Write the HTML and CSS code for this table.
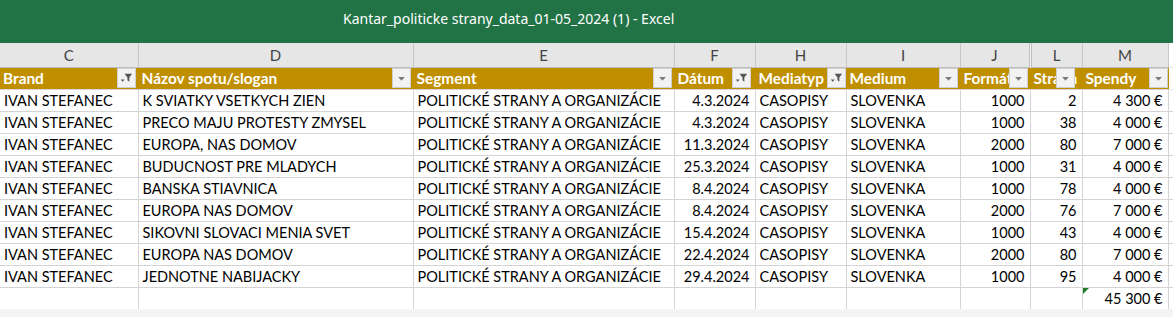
FILE: index.html
```html
<!DOCTYPE html>
<html lang="sk">
<head>
<meta charset="utf-8">
<title>Kantar_politicke strany_data_01-05_2024 (1) - Excel</title>
<link rel="stylesheet" href="styles.css">
</head>
<body>
<header class="titlebar"><span class="title">Kantar_politicke strany_data_01-05_2024 (1) - Excel</span></header>
<main class="sheet">
<table class="grid">
<colgroup>
<col class="w-c"><col class="w-d"><col class="w-e"><col class="w-f"><col class="w-h"><col class="w-i"><col class="w-j"><col class="w-l"><col class="w-m"><col class="w-x">
</colgroup>
<thead>
<tr class="colhead">
<th>C</th><th>D</th><th>E</th><th>F</th><th>H</th><th>I</th><th class="hid">J</th><th>L</th><th>M</th><th class="x"></th>
</tr>
<tr class="fields">
<th><span class="lbl">Brand</span><span class="fbtn"><svg viewBox="0 0 18 18" width="18" height="18"><path d="M7 4.5h8l-3 4v4.5l-2-1.5v-3z" fill="#555"/><path d="M3 10.5h4l-2 2.5z" fill="#555"/></svg></span></th>
<th><span class="lbl">Názov spotu/slogan</span><span class="fbtn"><svg viewBox="0 0 18 18" width="18" height="18"><path d="M5.5 8h7l-3.5 4z" fill="#7a7a7a"/></svg></span></th>
<th><span class="lbl">Segment</span><span class="fbtn"><svg viewBox="0 0 18 18" width="18" height="18"><path d="M5.5 8h7l-3.5 4z" fill="#7a7a7a"/></svg></span></th>
<th><span class="lbl">Dátum</span><span class="fbtn off4"><svg viewBox="0 0 18 18" width="18" height="18"><path d="M7 4.5h8l-3 4v4.5l-2-1.5v-3z" fill="#555"/><path d="M3 10.5h4l-2 2.5z" fill="#555"/></svg></span></th>
<th><span class="lbl">Mediatyp</span><span class="fbtn off0"><svg viewBox="0 0 18 18" width="18" height="18"><path d="M7 4.5h8l-3 4v4.5l-2-1.5v-3z" fill="#555"/><path d="M3 10.5h4l-2 2.5z" fill="#555"/></svg></span></th>
<th><span class="lbl">Medium</span><span class="fbtn"><svg viewBox="0 0 18 18" width="18" height="18"><path d="M5.5 8h7l-3.5 4z" fill="#7a7a7a"/></svg></span></th>
<th class="hidg"><span class="lbl">Formát</span><span class="fbtn"><svg viewBox="0 0 18 18" width="18" height="18"><path d="M5.5 8h7l-3.5 4z" fill="#7a7a7a"/></svg></span></th>
<th><span class="lbl">Strana</span><span class="fbtn off7"><svg viewBox="0 0 18 18" width="18" height="18"><path d="M5.5 8h7l-3.5 4z" fill="#7a7a7a"/></svg></span></th>
<th><span class="lbl">Spendy</span><span class="fbtn off0"><svg viewBox="0 0 18 18" width="18" height="18"><path d="M5.5 8h7l-3.5 4z" fill="#7a7a7a"/></svg></span></th>
<th class="x"></th>
</tr>
</thead>
<tbody>
<tr><td>IVAN STEFANEC</td><td>K SVIATKY VSETKYCH ZIEN</td><td>POLITICKÉ STRANY A ORGANIZÁCIE</td><td class="r">4.3.2024</td><td>CASOPISY</td><td>SLOVENKA</td><td class="r">1000</td><td class="r">2</td><td class="r">4 300 €</td><td class="x"></td></tr>
<tr><td>IVAN STEFANEC</td><td>PRECO MAJU PROTESTY ZMYSEL</td><td>POLITICKÉ STRANY A ORGANIZÁCIE</td><td class="r">4.3.2024</td><td>CASOPISY</td><td>SLOVENKA</td><td class="r">1000</td><td class="r">38</td><td class="r">4 000 €</td><td class="x"></td></tr>
<tr><td>IVAN STEFANEC</td><td>EUROPA, NAS DOMOV</td><td>POLITICKÉ STRANY A ORGANIZÁCIE</td><td class="r">11.3.2024</td><td>CASOPISY</td><td>SLOVENKA</td><td class="r">2000</td><td class="r">80</td><td class="r">7 000 €</td><td class="x"></td></tr>
<tr><td>IVAN STEFANEC</td><td>BUDUCNOST PRE MLADYCH</td><td>POLITICKÉ STRANY A ORGANIZÁCIE</td><td class="r">25.3.2024</td><td>CASOPISY</td><td>SLOVENKA</td><td class="r">1000</td><td class="r">31</td><td class="r">4 000 €</td><td class="x"></td></tr>
<tr><td>IVAN STEFANEC</td><td>BANSKA STIAVNICA</td><td>POLITICKÉ STRANY A ORGANIZÁCIE</td><td class="r">8.4.2024</td><td>CASOPISY</td><td>SLOVENKA</td><td class="r">1000</td><td class="r">78</td><td class="r">4 000 €</td><td class="x"></td></tr>
<tr><td>IVAN STEFANEC</td><td>EUROPA NAS DOMOV</td><td>POLITICKÉ STRANY A ORGANIZÁCIE</td><td class="r">8.4.2024</td><td>CASOPISY</td><td>SLOVENKA</td><td class="r">2000</td><td class="r">76</td><td class="r">7 000 €</td><td class="x"></td></tr>
<tr><td>IVAN STEFANEC</td><td>SIKOVNI SLOVACI MENIA SVET</td><td>POLITICKÉ STRANY A ORGANIZÁCIE</td><td class="r">15.4.2024</td><td>CASOPISY</td><td>SLOVENKA</td><td class="r">1000</td><td class="r">43</td><td class="r">4 000 €</td><td class="x"></td></tr>
<tr><td>IVAN STEFANEC</td><td>EUROPA NAS DOMOV</td><td>POLITICKÉ STRANY A ORGANIZÁCIE</td><td class="r">22.4.2024</td><td>CASOPISY</td><td>SLOVENKA</td><td class="r">2000</td><td class="r">80</td><td class="r">7 000 €</td><td class="x"></td></tr>
<tr><td>IVAN STEFANEC</td><td>JEDNOTNE NABIJACKY</td><td>POLITICKÉ STRANY A ORGANIZÁCIE</td><td class="r">29.4.2024</td><td>CASOPISY</td><td>SLOVENKA</td><td class="r">1000</td><td class="r">95</td><td class="r">4 000 €</td><td class="x"></td></tr>
<tr class="total"><td></td><td></td><td></td><td></td><td></td><td></td><td></td><td></td><td class="r sum">45 300 €</td><td class="x"></td></tr>
</tbody>
</table>
</main>
</body>
</html>
```
FILE: styles.css
```css
* { box-sizing: border-box; }
html, body { margin: 0; padding: 0; }
body {
  width: 1173px;
  height: 317px;
  overflow: hidden;
  background: #f4f4f4;
  font-family: Lato, "Liberation Sans", sans-serif;
}
.titlebar {
  height: 43px;
  background: #217346;
  color: #fff;
  font-family: "Noto Sans", "Open Sans", sans-serif;
  font-size: 14px;
  padding-left: 343px;
  padding-top: 9px;
  white-space: nowrap;
}
.sheet { background: #f4f4f4; }
.grid {
  table-layout: fixed;
  border-collapse: collapse;
  width: 1173px;
  font-size: 14.5px;
  color: #000;
}
.w-c { width: 138px; }
.w-d { width: 275px; }
.w-e { width: 261px; }
.w-f { width: 81px; }
.w-h { width: 91px; }
.w-i { width: 114px; }
.w-j { width: 70px; }
.w-l { width: 52px; }
.w-m { width: 86px; }
.w-x { width: 5px; }
th, td {
  padding: 0 4px;
  white-space: nowrap;
  overflow: hidden;
  text-overflow: clip;
}
.colhead th {
  height: 24px;
  background: #e6e6e6;
  color: #444;
  font-weight: normal;
  font-size: 15px;
  text-align: center;
  border-right: 1px solid #c8c8c8;
  border-bottom: 1px solid #bdbdbd;
  padding-top: 1px;
}
.colhead th.hid { border-right: 3px double #bdbdbd; }
.fields th {
  position: relative;
  height: 22px;
  background: #bf8f00;
  color: #fff;
  font-weight: bold;
  font-size: 15.4px;
  text-align: left;
  border-right: 1px solid #bf8f00;
  border-bottom: 1px solid #d4d4d4;
  padding-left: 3px;
}
.fields th.x, .colhead th.x { background: #fff; border-color: #e6e6e6; }
.fbtn {
  position: absolute;
  top: 0;
  right: 2px;
  width: 19px;
  height: 20px;
  background: #f2f2f2;
  border: 1px solid #d0d0d0;
  display: flex;
  align-items: center;
  justify-content: center;
}
.fbtn svg { display: block; }
.fbtn.off0 { right: 0; }
.fbtn.off4 { right: 4px; }
.fbtn.off7 { right: 7px; }
tbody td {
  height: 22px;
  background: #fff;
  border-right: 1px solid #d4d4d4;
  border-bottom: 1px solid #d4d4d4;
  padding-top: 1px;
}
td.r { text-align: right; padding-right: 5px; }
td.x { border-right: none; }
.total td { border-bottom: none; }
.total td.sum { position: relative; }
.total td.sum::before {
  content: "";
  position: absolute;
  left: 0;
  top: 0;
  border-top: 6px solid #1f7a2e;
  border-right: 6px solid transparent;
}
```
